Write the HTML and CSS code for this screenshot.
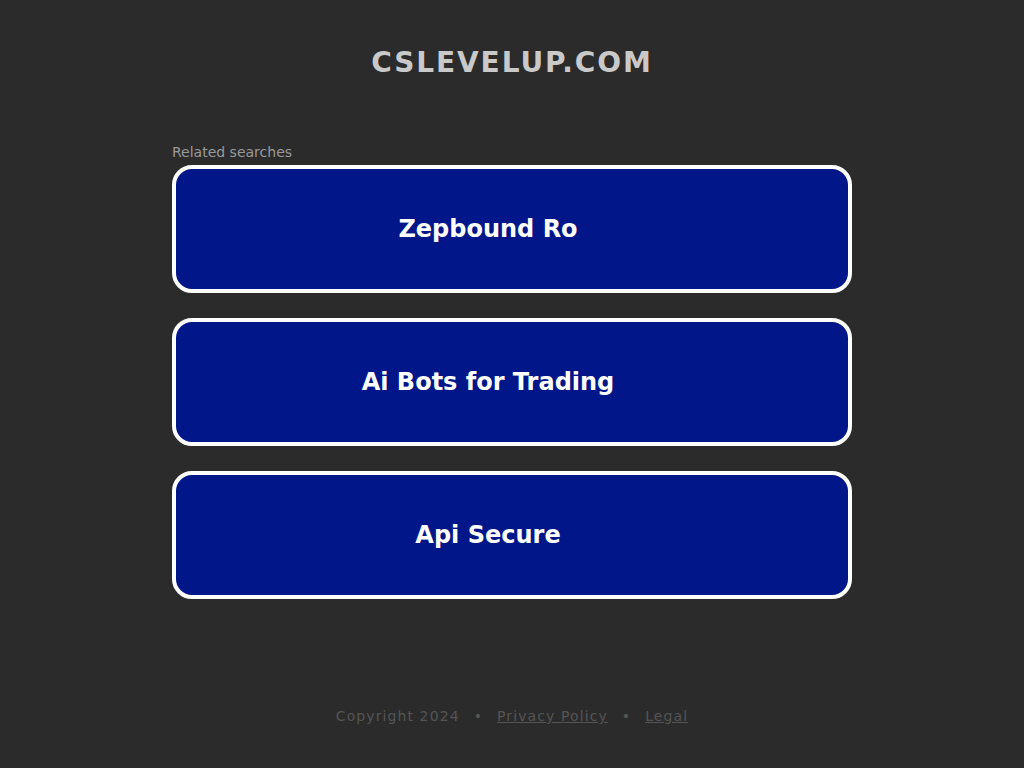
FILE: index.html
```html
<!DOCTYPE html>
<html lang="en">
<head>
<meta charset="utf-8">
<title>cslevelup.com</title>
<link rel="stylesheet" href="styles.css">
</head>
<body>
<header class="header">
  <h1 class="domain">CSLEVELUP.COM</h1>
</header>
<main class="content">
  <div class="related-label">Related searches</div>
  <ul class="links">
    <li><a class="link-box" href="#">Zepbound Ro</a></li>
    <li><a class="link-box" href="#">Ai Bots for Trading</a></li>
    <li><a class="link-box" href="#">Api Secure</a></li>
  </ul>
</main>
<footer class="footer">
  <span class="copy">Copyright 2024</span>
  <span class="sep">•</span>
  <a class="foot-link" href="#">Privacy Policy</a>
  <span class="sep">•</span>
  <a class="foot-link" href="#">Legal</a>
</footer>
</body>
</html>
```

FILE: styles.css
```css
html, body {
  margin: 0;
  padding: 0;
}
body {
  background: #2b2b2b;
  font-family: "DejaVu Sans", "Liberation Sans", sans-serif;
  min-height: 768px;
}
.header {
  display: flex;
  justify-content: center;
  padding-top: 46px;
}
.domain {
  margin: 0;
  font-size: 28px;
  line-height: 34px;
  font-weight: bold;
  letter-spacing: 1.9px;
  color: #c9c9c9;
}
.content {
  width: 680px;
  margin: 64px auto 0;
}
.related-label {
  font-size: 14px;
  line-height: 16px;
  color: #999;
  margin-bottom: 5px;
}
.links {
  list-style: none;
  margin: 0;
  padding: 0;
  display: flex;
  flex-direction: column;
  gap: 25px;
}
.link-box {
  display: flex;
  align-items: center;
  justify-content: center;
  box-sizing: border-box;
  height: 128px;
  padding-right: 48px;
  background: #001689;
  border: 4px solid #ffffff;
  border-radius: 20px;
  color: #ffffff;
  font-size: 24px;
  font-weight: bold;
  text-decoration: none;
}
.footer {
  display: flex;
  justify-content: center;
  align-items: center;
  gap: 14px;
  margin-top: 109px;
  font-size: 14px;
  letter-spacing: 1.1px;
  color: #555;
}
.foot-link {
  color: #555;
  text-decoration: underline;
}
```
